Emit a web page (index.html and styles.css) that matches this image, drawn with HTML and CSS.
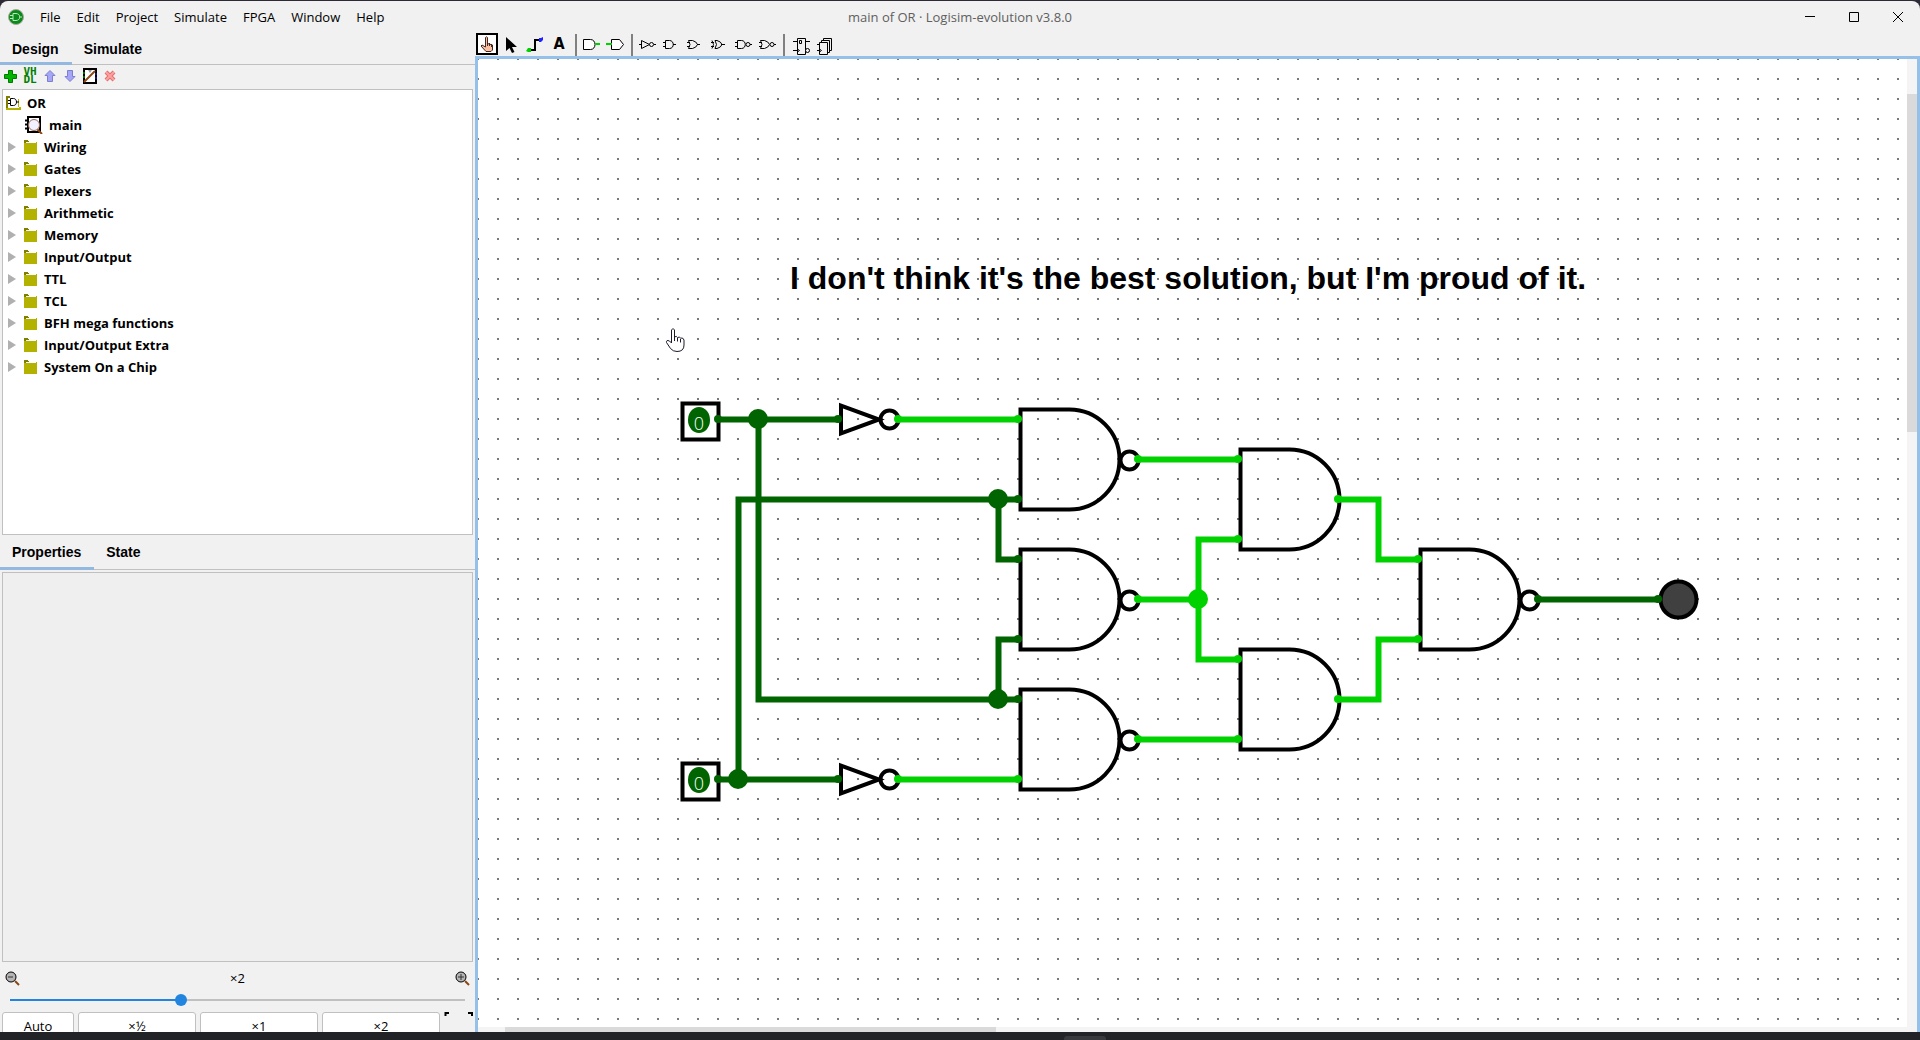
FILE: index.html
```html
<!DOCTYPE html>
<html lang="en">
<head>
<meta charset="utf-8">
<title>main of OR · Logisim-evolution v3.8.0</title>
<link rel="stylesheet" href="styles.css">
</head>
<body>
<svg width="0" height="0" class="defs" aria-hidden="true">
  <symbol id="folder" viewBox="0 0 14 15"><path d="M0 1V0h4v1h1v1H2v2H0z" fill="#807d00"/><path d="M0 3h12V2h1v12H0z" fill="#b4b200"/></symbol>
  <symbol id="arrow" viewBox="0 0 8 10"><path d="M0 0l8 5-8 5z" fill="#b0b0b0"/></symbol>
</svg>
<div class="window">
  <header class="titlebar">
    <div class="menus">
      <svg class="logo" width="16" height="16" viewBox="0 0 16 16"><circle cx="8" cy="8" r="7.500" fill="#0a8a1c" stroke="#a9a89a"/><path d="M5 4.500h3c5 0 5 7 0 7H5zM2 6.500h3M2 9.500h3M12 8h2" fill="none" stroke="#b8e8b8"/></svg>
      <nav class="menubar">
        <button>File</button><button>Edit</button><button>Project</button><button>Simulate</button><button>FPGA</button><button>Window</button><button>Help</button>
      </nav>
    </div>
    <h1 class="title">main of OR · Logisim-evolution v3.8.0</h1>
    <div class="controls">
      <button aria-label="Minimize"><svg width="10" height="10"><path d="M0 4.500h10" stroke="#000"/></svg></button>
      <button aria-label="Maximize"><svg width="10" height="10"><path d="M.5.5h9v9h-9z" stroke="#000" fill="none"/></svg></button>
      <button aria-label="Close"><svg width="10" height="10"><path d="M0 0l10 10M10 0L0 10" stroke="#000"/></svg></button>
    </div>
  </header>
  <div class="workspace">
    <aside class="sidebar">
      <div class="tabs" role="tablist">
        <button class="tab active" role="tab">Design</button><button class="tab" role="tab">Simulate</button>
      </div>
      <div class="tree-tools">
        <button aria-label="Add circuit"><svg width="16" height="16"><path d="M6.500 2.500h4v4h4v4h-4v4h-4v-4h-4v-4h4z" fill="#00b400" stroke="#007a00"/></svg></button>
        <button class="vhdl"><span>VH</span><span>DL</span></button>
        <button aria-label="Move up"><svg width="16" height="16"><path d="M8 2.500l5 5h-2.500v6h-5v-6H3z" fill="#a6a6f8" stroke="#7f7fd0"/></svg></button>
        <button aria-label="Move down"><svg width="16" height="16"><path d="M8 13.500l5-5h-2.500v-6h-5v6H3z" fill="#a6a6f8" stroke="#7f7fd0"/></svg></button>
        <button aria-label="Edit circuit"><svg width="16" height="16"><path d="M2 1h12v14H2z" fill="#fff" stroke="#000" stroke-width="2"/><path d="M6 2h4l-2 3z" fill="#999"/><path d="M1 5h2M1 9h2" stroke="#0c0"/><path d="M13 6h2M13 10h2" stroke="#22f"/><path d="M2 14L13 3" stroke="#8b4513" stroke-width="2"/></svg></button>
        <button aria-label="Remove circuit"><svg width="16" height="16"><path d="M4 4l8 8M12 4l-8 8" stroke="#e07070" stroke-width="4"/><path d="M4 4l8 8M12 4l-8 8" stroke="#ffa0a0" stroke-width="2"/></svg></button>
      </div>
      <ul class="tree">
        <li class="root"><svg width="15" height="15"><path d="M0 0h4v2H2v12H0z" fill="#807d00"/><path d="M0 12h13V3h-1V11h3v3H0z" fill="#b4b200"/><path d="M2 2h10v9H2z" fill="#fff"/><path d="M4.500 2.500h3c4 0 4 7 0 7h-3zM2 4.500h2M2 7.500h2M11 6h2" fill="none" stroke="#000"/></svg>OR</li>
        <li class="circuit"><svg width="18" height="18"><path d="M3 1h12v15H3z" fill="#fff" stroke="#000" stroke-width="2"/><path d="M0 4.500h3M0 8.500h3M0 12.500h3" stroke="#000" stroke-width="2"/><path d="M12 13l5 5" stroke="#8b4513" stroke-width="2"/><circle cx="9" cy="9" r="5.500" fill="#f0f0ff" stroke="#9a6a5a"/></svg>main</li>
        <li><svg width="8" height="10"><use href="#arrow"/></svg><svg width="14" height="15"><use href="#folder"/></svg>Wiring</li>
        <li><svg width="8" height="10"><use href="#arrow"/></svg><svg width="14" height="15"><use href="#folder"/></svg>Gates</li>
        <li><svg width="8" height="10"><use href="#arrow"/></svg><svg width="14" height="15"><use href="#folder"/></svg>Plexers</li>
        <li><svg width="8" height="10"><use href="#arrow"/></svg><svg width="14" height="15"><use href="#folder"/></svg>Arithmetic</li>
        <li><svg width="8" height="10"><use href="#arrow"/></svg><svg width="14" height="15"><use href="#folder"/></svg>Memory</li>
        <li><svg width="8" height="10"><use href="#arrow"/></svg><svg width="14" height="15"><use href="#folder"/></svg>Input/Output</li>
        <li><svg width="8" height="10"><use href="#arrow"/></svg><svg width="14" height="15"><use href="#folder"/></svg>TTL</li>
        <li><svg width="8" height="10"><use href="#arrow"/></svg><svg width="14" height="15"><use href="#folder"/></svg>TCL</li>
        <li><svg width="8" height="10"><use href="#arrow"/></svg><svg width="14" height="15"><use href="#folder"/></svg>BFH mega functions</li>
        <li><svg width="8" height="10"><use href="#arrow"/></svg><svg width="14" height="15"><use href="#folder"/></svg>Input/Output Extra</li>
        <li><svg width="8" height="10"><use href="#arrow"/></svg><svg width="14" height="15"><use href="#folder"/></svg>System On a Chip</li>
      </ul>
      <div class="tabs lower" role="tablist">
        <button class="tab active" role="tab">Properties</button><button class="tab" role="tab">State</button>
      </div>
      <div class="attributes"></div>
      <div class="zoom">
        <div class="zoom-row">
          <button aria-label="Zoom out"><svg width="15" height="15"><path d="M10 10l4 4" stroke="#8b4513" stroke-width="2"/><circle cx="6" cy="6" r="5" fill="#b4b4b4" stroke="#000"/><path d="M3 6h5" stroke="#333"/></svg></button>
          <label for="zoom">×2</label>
          <button aria-label="Zoom in"><svg width="15" height="15"><path d="M10 10l4 4" stroke="#8b4513" stroke-width="2"/><circle cx="6" cy="6" r="5" fill="#b4b4b4" stroke="#000"/><path d="M3 6h6M6 3v6" stroke="#333"/></svg></button>
        </div>
        <input id="zoom" class="slider" type="range" min="0" max="1000" value="372">
        <div class="zoom-buttons">
          <button class="auto">Auto</button><button>×½</button><button>×1</button><button>×2</button>
          <button class="fit" aria-label="Fit"><svg width="29" height="24"><path d="M1.500 4V1H5M24 1h4V4" fill="none" stroke="#000" stroke-width="2"/></svg></button>
        </div>
      </div>
    </aside>
    <main class="editor">
      <div class="toolbar">
        <button class="selected" aria-label="Poke"><svg width="22" height="22"><path d="M9.500 4.500q1-1.500 2 0v6l5 1.500v5l-1.500 1.500h-5l-5-5.500 1-1 3.500 2z" fill="#f8bfa0" stroke="#402820"/><path d="M11.500 9v4M13.500 10v3M15.500 11v3" stroke="#402820"/></svg></button>
        <button aria-label="Select"><svg width="22" height="22"><path d="M6 4l11 10h-5l2.500 5-2.500 1-2.500-5L6 18z"/></svg></button>
        <button aria-label="Wire"><svg width="22" height="22"><path d="M5 17h6V7h6" fill="none" stroke="#000" stroke-width="2"/><path d="M4 15h3v4H4l-2-1z" fill="#00d200"/><path d="M15 5h2l2-1v3l-2 2h-2z" fill="#22f"/></svg></button>
        <button class="text-tool">A</button>
        <i class="sep"></i>
        <button aria-label="Output pin"><svg width="22" height="22"><path d="M3.500 6.500h7c6 0 6 10 0 10h-7z" fill="#fff" stroke="#000"/><path d="M15 11h5" stroke="#00d200" stroke-width="2"/></svg></button>
        <button aria-label="Input pin"><svg width="22" height="22"><path d="M7.500 6.500h8l4 5-4 5h-8z" fill="#fff" stroke="#000"/><path d="M2 11h6" stroke="#00d200" stroke-width="2"/></svg></button>
        <i class="sep"></i>
        <button aria-label="NOT"><svg width="22" height="22" class="glyph"><path d="M3 11.500h2M5.500 7.500v8l8-4zM18 11.500h2"/><circle cx="15.500" cy="11.500" r="2"/></svg></button>
        <button aria-label="AND"><svg width="22" height="22" class="glyph"><path d="M3 9.500h2M3 13.500h2M5.500 7.500h4c5 0 5 8 0 8h-4zM13 11.500h3"/></svg></button>
        <button aria-label="OR"><svg width="22" height="22" class="glyph"><path d="M3 9.500h3M3 13.500h3M4.500 7.500h4q4 1 5 4q-1 3-5 4h-4q3-4 0-8M13 11.500h3"/></svg></button>
        <button aria-label="XOR"><svg width="22" height="22" class="glyph"><path d="M3 9.500h3M3 13.500h3M7 7.500h2q4 1 5 4q-1 3-5 4H7q3-4 0-8M4 7.500q3 4 0 8M13 11.500h4"/></svg></button>
        <button aria-label="NAND"><svg width="22" height="22" class="glyph"><path d="M3 9.500h2M3 13.500h2M5.500 7.500h4c5 0 5 8 0 8h-4zM18 11.500h2"/><circle cx="16" cy="11.500" r="2"/></svg></button>
        <button aria-label="NOR"><svg width="22" height="22" class="glyph"><path d="M3 9.500h3M3 13.500h3M4.500 7.500h4q4 1 5 4q-1 3-5 4h-4q3-4 0-8M18 11.500h2"/><circle cx="16" cy="11.500" r="2"/></svg></button>
        <i class="sep"></i>
        <button aria-label="Add subcircuit"><svg width="22" height="22" class="glyph"><path d="M9.500 5.500h8v16h-8zM11.500 7.500h2v3h-2zM5 8.500h4M5 17.500h4M18 8.500h4M9.500 16l2 1.500-2 1.500"/><circle cx="19.500" cy="17.500" r="2"/></svg></button>
        <button aria-label="Layers"><svg width="22" height="22" class="glyph"><path d="M11.500 5.500h8v12h-8z"/><path d="M9.500 7.500h8v12h-8z"/><path d="M7.500 9.500h8v12h-8zM5 11.500h2M5 17.500h2M7.500 16l2 1.500-2 1.500"/></svg></button>
      </div>
      <div class="canvas">
        <svg class="sheet" width="100%" height="100%">
          <defs>
            <pattern id="grid" width="20" height="20" patternUnits="userSpaceOnUse" x="-1" y="-1"><path d="M0 0h2v2H0z" fill="#777"/></pattern>
            <path id="and" d="M49 0H0V100H49A50 50 0 0 0 49 0Z"/>
            <g id="nand"><use href="#and"/><circle cx="109" cy="51" r="9"/></g>
            <g id="not"><path d="M0 -14V14L38 0Z"/><circle cx="48.500" cy="0" r="9"/></g>
          </defs>
          <rect width="100%" height="100%" fill="url(#grid)"/>
          <g transform="translate(-478 -59)">
            <text class="note" x="790" y="289">I don't think it's the best solution, but I'm proud of it.</text>
            <g class="gates">
              <rect x="682.500" y="403.500" width="36" height="36"/>
              <rect x="682.500" y="763.500" width="36" height="36"/>
              <use href="#not" x="841" y="419.500"/>
              <use href="#not" x="841" y="779.500"/>
              <use href="#nand" x="1020.500" y="409.500"/>
              <use href="#nand" x="1020.500" y="549.500"/>
              <use href="#nand" x="1020.500" y="689.500"/>
              <use href="#and" x="1240.500" y="449.500"/>
              <use href="#and" x="1240.500" y="649.500"/>
              <use href="#nand" x="1420.500" y="549.500"/>
              <circle class="led" cx="1678.500" cy="599.500" r="18"/>
            </g>
            <g class="wires low" transform="translate(.5 .5)">
              <path d="M718 419H838M758 419V699H1018M738 779V499H1018M718 779H838M998 499V559H1018M998 699V639H1018M1538 599H1658"/>
            </g>
            <g class="wires high" transform="translate(.5 .5)">
              <path d="M898 419H1018M898 779H1018M1138 459H1238M1138 599H1198M1238 539H1198V659H1238M1138 739H1238M1338 499H1378V559H1418M1338 699H1378V639H1418"/>
            </g>
            <g class="low">
              <circle cx="758" cy="419" r="10"/><circle cx="998" cy="499" r="10"/><circle cx="998" cy="699" r="10"/><circle cx="738" cy="779" r="10"/>
              <circle cx="718" cy="419" r="4"/><circle cx="838" cy="419" r="4"/><circle cx="718" cy="779" r="4"/><circle cx="838" cy="779" r="4"/>
              <circle cx="1018" cy="499" r="4"/><circle cx="1018" cy="559" r="4"/><circle cx="1018" cy="639" r="4"/><circle cx="1018" cy="699" r="4"/>
              <circle cx="1538" cy="599" r="4"/><circle cx="1658" cy="599" r="4"/>
              <ellipse cx="699" cy="420" rx="11" ry="13"/><ellipse cx="699" cy="780" rx="11" ry="13"/>
            </g>
            <g class="high">
              <circle cx="1198" cy="599" r="10"/>
              <circle cx="898" cy="419" r="4"/><circle cx="898" cy="779" r="4"/><circle cx="1018" cy="419" r="4"/><circle cx="1018" cy="779" r="4"/>
              <circle cx="1138" cy="459" r="4"/><circle cx="1138" cy="599" r="4"/><circle cx="1138" cy="739" r="4"/>
              <circle cx="1238" cy="459" r="4"/><circle cx="1238" cy="539" r="4"/><circle cx="1238" cy="659" r="4"/><circle cx="1238" cy="739" r="4"/>
              <circle cx="1338" cy="499" r="4"/><circle cx="1338" cy="699" r="4"/><circle cx="1418" cy="559" r="4"/><circle cx="1418" cy="639" r="4"/>
            </g>
            <text class="bit" x="699" y="430">0</text>
            <text class="bit" x="699" y="790">0</text>
            <path class="pointer" d="M671.500 343V330q1.500-3 3 0v7q2-1.500 3 .5q2-1 3 .5q3-.5 3.500 2v5q0 6.500-7 6.500q-4 0-6.500-3l-4-6q-.5-3 3-1.500zM674.500 337v4M677.500 338v3.500M680.500 339v3.500"/>
          </g>
        </svg>
        <div class="vscroll"><div class="vthumb"></div></div>
        <div class="hscroll"><div class="hthumb"></div></div>
      </div>
    </main>
  </div>
</div>
<footer class="taskbar"><div class="handle"></div></footer>
</body>
</html>
```
FILE: styles.css
```css
* { box-sizing: border-box; }
html, body { height: 100%; }
body {
  margin: 0;
  padding-top: 1px;
  display: flex;
  flex-direction: column;
  overflow: hidden;
  background: #2e2a35;
  color: #000;
  font: 13px/16px "Open Sans", "Noto Sans", sans-serif;
}
button {
  margin: 0;
  padding: 0;
  border: 0;
  background: none;
  color: inherit;
  font: inherit;
}
svg { display: block; flex: none; }
.defs { position: absolute; }

.window {
  flex: 1;
  min-height: 0;
  display: flex;
  flex-direction: column;
  background: #f1f1f1;
  border-radius: 8px 8px 0 0;
  overflow: hidden;
}
.titlebar {
  flex: none;
  height: 32px;
  display: grid;
  grid-template-columns: 1fr auto 1fr;
  align-items: center;
}
.menus { display: flex; align-items: center; padding-left: 8px; gap: 16px; }
.menubar { display: flex; gap: 16px; }
.title { margin: 0; font-size: 13px; font-weight: 400; color: #606060; }
.controls { display: flex; justify-content: flex-end; }
.controls button { width: 44px; height: 30px; display: grid; place-items: center; }

.workspace { flex: 1; min-height: 0; display: flex; }
.sidebar { flex: none; width: 475px; display: flex; flex-direction: column; min-height: 0; }
.tabs {
  flex: none;
  height: 32px;
  display: flex;
  box-shadow: inset 0 -1px #c0c0c0;
  font: bold 14px/16px "Liberation Sans", Arial, sans-serif;
}
.lower { height: 35px; margin-bottom: 2px; }
.tab { padding: 3px 13px 0 12px; border-bottom: 3px solid transparent; }
.tab.active { border-color: #94b9e0; }
.tree-tools { flex: none; height: 24px; display: flex; align-items: center; gap: 4px; padding: 0 0 2px 2px; }
.tree-tools button { width: 16px; }
.vhdl { color: #008000; font: bold 11px/8px "DejaVu Sans Mono", monospace; }
.vhdl span { display: block; }

.tree {
  flex: 445 1 0;
  min-height: 0;
  margin: 0 2px;
  padding: 2px 0 0 3px;
  border: 1px solid #c0c0c0;
  background: #fff;
  list-style: none;
  overflow: hidden;
  font-weight: 700;
  line-height: 22px;
}
.tree li { display: flex; align-items: center; gap: 6px; height: 22px; padding-left: 2px; }
.tree li svg + svg { margin-left: 2px; }
.tree .root { padding-left: 0; }
.tree .circuit { padding-left: 19px; }
.attributes { flex: 391 1 0; min-height: 0; margin: 0 2px; border: 1px solid #c0c0c0; background: #efefef; }

.zoom { flex: none; height: 70px; padding: 8px 2px 0; overflow: hidden; }
.zoom-row { display: flex; justify-content: space-between; padding: 0 3px; }
.slider {
  appearance: none;
  display: block;
  width: calc(100% - 16px);
  height: 12px;
  margin: 8px 8px 6px;
  background: linear-gradient(90deg, #2185e0 38%, #c0c0c0 38%) center / 100% 2px no-repeat;
}
.slider::-webkit-slider-thumb { appearance: none; width: 12px; height: 12px; border-radius: 50%; background: #2185e0; }
.zoom-buttons { display: flex; gap: 4px; }
.zoom-buttons button { flex: 118 1 0; height: 28px; border: 1px solid #c0c0c0; border-radius: 3px; background: #fff; }
.zoom-buttons .auto { flex: 0 0 72px; }
.zoom-buttons .fit { flex: 0 0 29px; border: 0; background: none; }
.fit svg { height: 28px; }

.editor { flex: 1; min-width: 0; display: flex; flex-direction: column; }
.toolbar { flex: none; height: 23px; display: flex; gap: 2px; padding-left: 1px; }
.toolbar button { width: 22px; height: 22px; }
.toolbar .selected { box-shadow: inset 0 0 0 2px #000; background: #fff; }
.toolbar .text-tool { font: bold 16px/22px "DejaVu Sans Condensed", "DejaVu Sans", sans-serif; }
.sep { width: 2px; margin: 1px 1px 0 3px; background: #808080; }
.glyph { fill: none; stroke: #000; }
.glyph path, .glyph circle { fill: #f1f1f1; }

.canvas {
  flex: 1;
  min-height: 0;
  display: grid;
  grid-template: minmax(0, 1fr) 5px / minmax(0, 1fr) 10px;
  border: 3px solid #95c0ea;
  border-bottom: 0;
  background: #fff;
}
.sheet { overflow: hidden; }
.vscroll { grid-row: span 2; background: #f4f4f4; padding-top: 35px; }
.vthumb { height: 36%; background: #dadada; }
.hscroll { background: #f4f4f4; padding-left: 27px; }
.hthumb { width: 35%; height: 5px; background: #dadada; }

.note { font: bold 32px "Liberation Sans", Arial, sans-serif; }
.bit { font: 300 18px "Open Sans", sans-serif; fill: #fff; text-anchor: middle; }
.gates { fill: none; stroke: #000; stroke-width: 4; }
.led { fill: #404040; }
.low { fill: #006400; }
.high { fill: #00d200; }
.wires { fill: none; stroke-width: 6; }
.wires.low { stroke: #006400; }
.wires.high { stroke: #00d200; }
.pointer { fill: #fff; stroke: #1a1a2a; }

.taskbar { flex: none; height: 8px; padding-top: 4px; background: #222327; }
.handle { width: 42px; height: 4px; margin: 0 auto; background: #38393d; border-radius: 3px 3px 0 0; transform: translateX(125px); }
```
